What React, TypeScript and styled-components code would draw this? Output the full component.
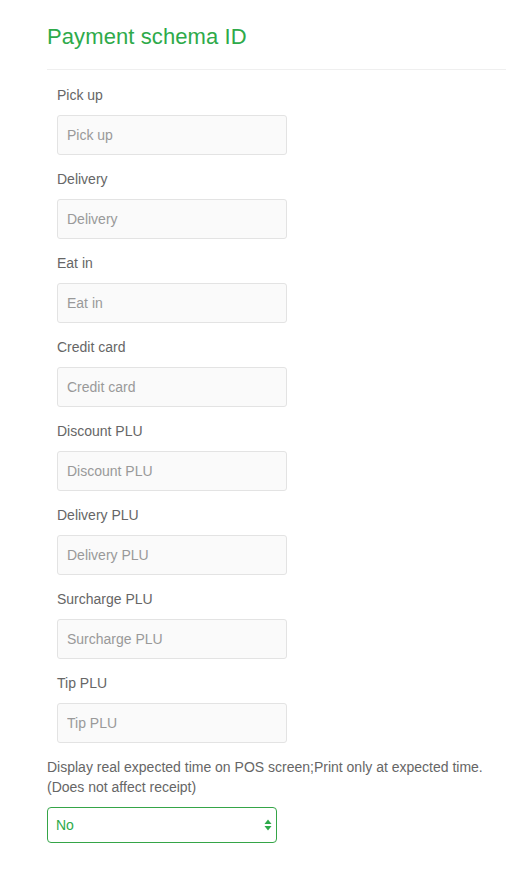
import React from "react";
import styled, { createGlobalStyle } from "styled-components";

const Global = createGlobalStyle`
  html, body { margin: 0; padding: 0; background: #ffffff; }
  body { font-family: "Liberation Sans", Arial, Helvetica, sans-serif; }
  * { box-sizing: border-box; }
`;

const Page = styled.div`
  padding: 0 18px 30px 47px;
`;

const Title = styled.h2`
  margin: 0;
  padding-top: 24px;
  padding-bottom: 19px;
  font-size: 22px;
  line-height: 26px;
  font-weight: 400;
  letter-spacing: 0.1px;
  color: #2eaa4a;
  border-bottom: 1px solid #efefef;
`;

const Fields = styled.div`
  padding: 15px 0 0 10px;
  display: flex;
  flex-direction: column;
  gap: 14px;
`;

const Field = styled.div`
  display: flex;
  flex-direction: column;
  gap: 10px;
`;

const Label = styled.label`
  font-size: 14px;
  line-height: 20px;
  color: #666666;
`;

const Input = styled.input`
  width: 230px;
  height: 40px;
  padding: 0 9px;
  font-family: inherit;
  font-size: 14px;
  color: #555;
  background: #fafafa;
  border: 1px solid #e3e3e3;
  border-radius: 3px;
  outline: none;
  &::placeholder { color: #999999; }
`;

const Note = styled.p`
  margin: 14px 0 10px;
  font-size: 14px;
  line-height: 20px;
  color: #666666;
`;

const SelectWrap = styled.div`
  position: relative;
  width: 230px;
  height: 36px;
`;

const Select = styled.select`
  appearance: none;
  -webkit-appearance: none;
  width: 100%;
  height: 100%;
  padding: 0 24px 0 8px;
  font-family: inherit;
  font-size: 14px;
  color: #2eaa4a;
  background: #ffffff;
  border: 1px solid #35a548;
  border-radius: 4px;
  outline: none;
`;

const Arrows = styled.svg`
  position: absolute;
  right: 5px;
  top: 50%;
  transform: translateY(-50%);
  pointer-events: none;
`;

const fields = [
  "Pick up",
  "Delivery",
  "Eat in",
  "Credit card",
  "Discount PLU",
  "Delivery PLU",
  "Surcharge PLU",
  "Tip PLU",
];

export default function App() {
  return (
    <>
      <Global />
      <Page>
        <Title>Payment schema ID</Title>
        <Fields>
          {fields.map((f) => (
            <Field key={f}>
              <Label>{f}</Label>
              <Input placeholder={f} />
            </Field>
          ))}
        </Fields>
        <Note>
          Display real expected time on POS screen;Print only at expected time.
          <br />
          (Does not affect receipt)
        </Note>
        <SelectWrap>
          <Select defaultValue="no">
            <option value="no">No</option>
            <option value="yes">Yes</option>
          </Select>
          <Arrows width="8" height="12" viewBox="0 0 8 12">
            <path d="M4 0.5 L7.5 5 L0.5 5 Z" fill="#2eaa4a" />
            <path d="M0.5 7 L7.5 7 L4 11.5 Z" fill="#2eaa4a" />
          </Arrows>
        </SelectWrap>
      </Page>
    </>
  );
}
